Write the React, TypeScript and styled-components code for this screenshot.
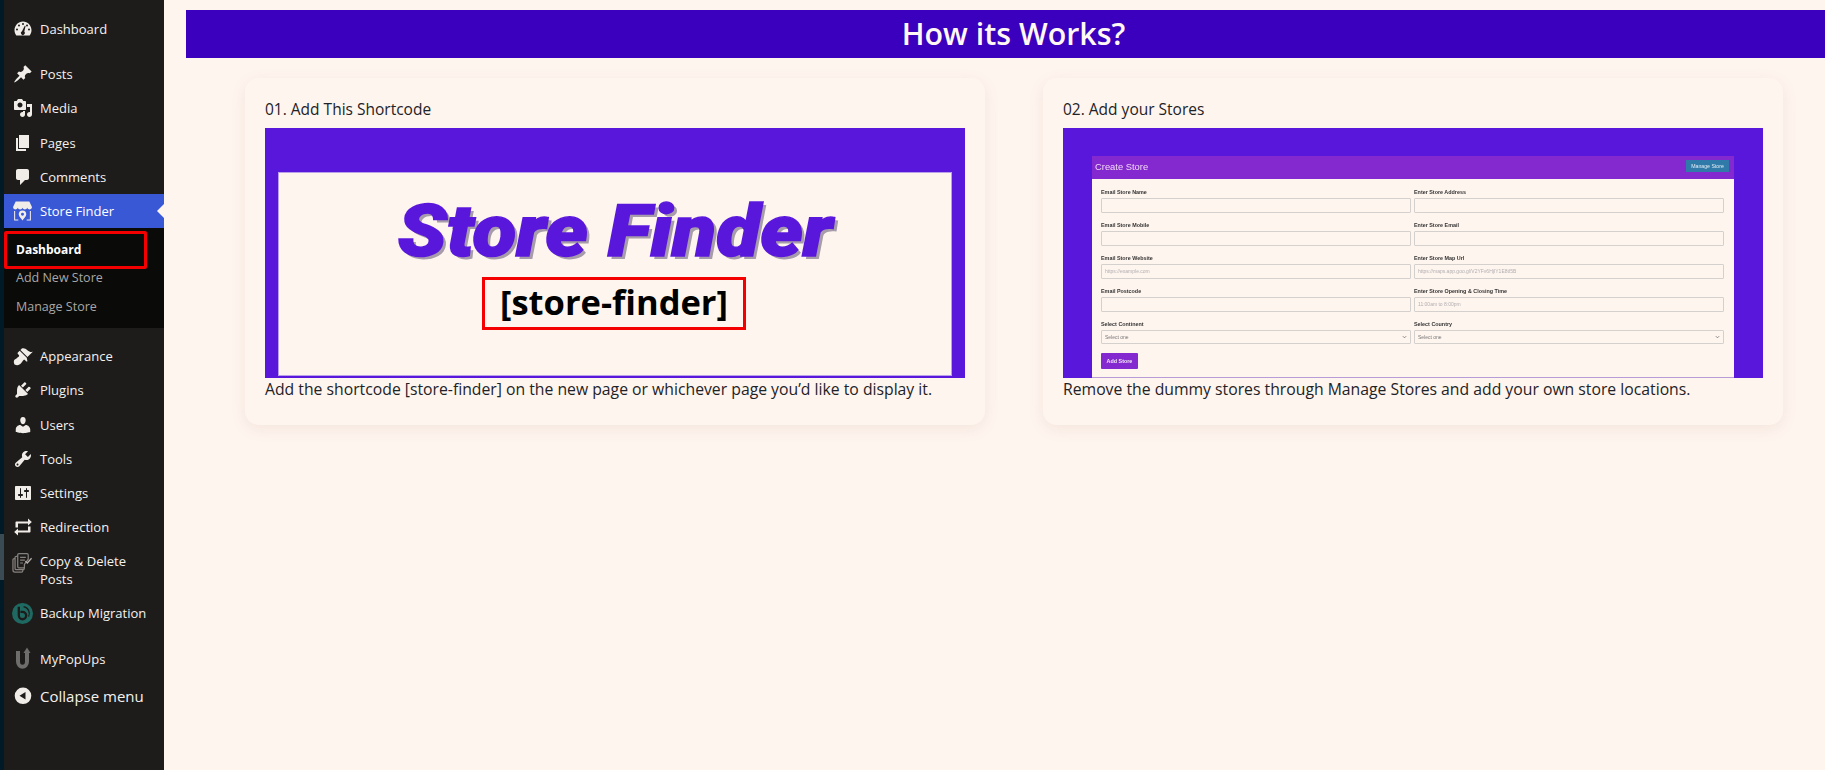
import styled, { createGlobalStyle } from 'styled-components';
import type { ReactNode } from 'react';

const GlobalStyle = createGlobalStyle`
    html, body {
        margin: 0;
        padding: 0;
        background: #fff5ef;
    }
    * {
        box-sizing: border-box;
    }
`;

const Icon = ({ size = 20, children }: { size?: number; children: ReactNode }) => (
    <svg width={size} height={size} viewBox="0 0 20 20" fill="#f0ece8" fillRule="evenodd">
        {children}
    </svg>
);

const icons = {
    dashboard: (
        <Icon>
            <path d="M3.3 16.500h13.400c1.100-1.430 1.800-3.210 1.800-5.140C18.500 6.400 14.700 2.500 10 2.500S1.500 6.400 1.500 11.360c0 1.930.7 3.710 1.800 5.140zM10 4a1 1 0 1 1 0 2 1 1 0 0 1 0-2zM6 5.500a1 1 0 1 1 0 2 1 1 0 0 1 0-2zM14 5.500a1 1 0 1 1 0 2 1 1 0 0 1 0-2zM4 9.500a1 1 0 1 1 0 2 1 1 0 0 1 0-2zM16 9.500a1 1 0 1 1 0 2 1 1 0 0 1 0-2zM11.800 6.800l.8.300-1.300 5.500a2 2 0 1 1-2.300-.4z" />
        </Icon>
    ),
    posts: (
        <Icon>
            <path d="M10.440 3.020l1.820-1.820 6.360 6.350-1.830 1.820c-1.050-.68-2.480-.57-3.410.36l-.75.75c-.92.93-1.040 2.350-.35 3.410l-1.830 1.820-2.410-2.410-2.800 2.790c-.42.42-3.380 2.710-3.800 2.290s1.860-3.390 2.280-3.810l2.790-2.790L4.100 9.360l1.830-1.820c1.050.69 2.480.57 3.400-.36l.75-.75c.93-.92 1.050-2.350.36-3.410z" />
        </Icon>
    ),
    media: (
        <Icon>
            <path d="M13 11V4c0-.55-.45-1-1-1h-1.670L9 1H5L3.670 3H2c-.55 0-1 .45-1 1v7c0 .55.45 1 1 1h10c.55 0 1-.45 1-1zM7 4.500c1.380 0 2.500 1.120 2.500 2.500S8.380 9.500 7 9.500 4.500 8.380 4.500 7 5.620 4.500 7 4.500zM14 6h5v10.500c0 1.380-1.120 2.500-2.500 2.500S14 17.880 14 16.500s1.120-2.500 2.500-2.500c.17 0 .34.020.5.050V9h-3V6zm-4 8.050V13h2v3.500c0 1.380-1.120 2.500-2.500 2.500S7 17.880 7 16.500 8.120 14 9.500 14c.17 0 .34.020.5.050z" />
        </Icon>
    ),
    pages: (
        <Icon>
            <path d="M6 15V2h10v13H6zm-1 1h8v2H3V5h2v11z" />
        </Icon>
    ),
    comments: (
        <Icon>
            <path d="M5 2h9c1.100 0 2 .9 2 2v7c0 1.100-.9 2-2 2h-2l-5 5v-5H5c-1.100 0-2-.9-2-2V4c0-1.100.9-2 2-2z" />
        </Icon>
    ),
    store: (
        <Icon size={22}>
            <path d="M3.500 1h13l2.500 5.200c0 1.300-1 2.300-2.250 2.300-1 0-1.900-.6-2.250-1.500-.35.900-1.200 1.500-2.250 1.500S10.350 7.900 10 7c-.35.900-1.200 1.500-2.250 1.500S5.850 7.900 5.500 7c-.35.900-1.250 1.500-2.250 1.500C2 8.500 1 7.500 1 6.200z" />
            <path d="M2 10h1v8h3v1H2zM18 10h-1v8h-3v1h4z" />
            <path d="M10 9.500a3.600 3.600 0 0 1 3.600 3.600c0 2.300-2.500 4.300-3.600 5.900-1.100-1.600-3.600-3.600-3.600-5.900A3.600 3.600 0 0 1 10 9.500zm0 2.200a1.400 1.400 0 1 0 0 2.800 1.400 1.400 0 0 0 0-2.800z" />
        </Icon>
    ),
    appearance: (
        <Icon>
            <path d="M14.480 11.060L7.410 3.990l1.500-1.500c.5-.56 2.300-.47 3.510.32 1.210.8 1.430 1.280 2.910 2.100 1.180.64 2.450 1.260 4.450.85zm-.71.71L6.700 4.700 4.830 6.570c-.39.39-.39 1.020 0 1.410l1.060 1.060c.39.39.39 1.030 0 1.420-.6.600-1.430 1.110-2.210 1.690-.35.260-.7.530-1.010.84C1.430 13.230 0 15.200 1.520 18.480c3.280 1.520 5.250.090 6.490-1.150.31-.31.580-.66.840-1.010.58-.78 1.090-1.610 1.690-2.210.39-.39 1.020-.39 1.410 0l1.060 1.060c.39.39 1.020.39 1.410 0z" />
        </Icon>
    ),
    plugins: (
        <Icon>
            <path d="M13.110 4.360L9.870 7.600 8 5.730l3.240-3.240c.35-.34 1.050-.2 1.560.32.52.51.66 1.210.31 1.550zm-8 1.770l.91-1.120 9.010 9.010-1.190.84c-.71.710-2.630 1.160-3.820 1.160H6.140L4.900 17.260c-.59.590-1.540.59-2.120 0-.59-.58-.59-1.530 0-2.120l1.240-1.240v-3.880c0-1.130.4-3.190 1.090-3.890zm7.260 3.970l3.240-3.240c.34-.35 1.040-.21 1.550.31.52.51.66 1.210.31 1.550l-3.240 3.250z" />
        </Icon>
    ),
    users: (
        <Icon>
            <path d="M10 9.250c-2.270 0-2.730-3.440-2.730-3.440C7 4.020 7.820 2 9.960 2c2.150 0 2.970 2.020 2.700 3.810 0 0-.41 3.440-2.660 3.440zm0 2.570L12.720 10c2.390 0 4.520 2.330 4.520 4.530v2.490s-3.650 1.130-7.240 1.130c-3.650 0-7.240-1.130-7.240-1.130v-2.490c0-2.250 1.940-4.480 4.470-4.480z" />
        </Icon>
    ),
    tools: (
        <Icon>
            <path d="M16.680 9.770c-1.340 1.340-3.300 1.670-4.950.99l-5.410 6.520c-.99.990-2.590.99-3.580 0s-.99-2.590 0-3.570l6.520-5.420c-.68-1.650-.35-3.610.99-4.950 1.280-1.280 3.120-1.620 4.720-1.060l-2.890 2.890 2.820 2.820 2.860-2.870c.53 1.580.18 3.400-1.080 4.650zM3.810 16.210c.4.390 1.040.39 1.430 0 .4-.4.400-1.040 0-1.430-.39-.4-1.030-.4-1.430 0-.39.390-.39 1.030 0 1.430z" />
        </Icon>
    ),
    settings: (
        <Icon>
            <path d="M18 16V4c0-.55-.45-1-1-1H3c-.55 0-1 .45-1 1v12c0 .55.45 1 1 1h14c.55 0 1-.45 1-1zM8 11h1c.55 0 1 .45 1 1s-.45 1-1 1H8v1.500c0 .280-.22.500-.5.500s-.5-.22-.5-.5V13H6c-.55 0-1-.45-1-1s.45-1 1-1h1V5.500c0-.280.22-.5.5-.5s.5.220.5.500V11zm5-2h-1c-.55 0-1-.45-1-1s.45-1 1-1h1V5.500c0-.280.22-.5.5-.5s.5.220.5.500V7h1c.55 0 1 .45 1 1s-.45 1-1 1h-1v5.500c0 .280-.22.500-.5.500s-.5-.22-.5-.5V9z" />
        </Icon>
    ),
    redirection: (
        <Icon>
            <path d="M15 1.500l3.800 3.500L15 8.500V6.600H5v4H2.500V5.500c0-.55.45-1 1-1H15zM5 18.500L1.200 15 5 11.500v1.900h10v-4h2.500v5.100c0 .55-.45 1-1 1H5z" />
        </Icon>
    ),
    copy: (
        <svg width="22" height="22" viewBox="0 0 22 22" fill="none" stroke="#85817e" strokeWidth="1.300">
            <path d="M6 2.500c0-.8.6-1.300 1.300-1.300h8.400c.7 0 1.300.5 1.300 1.300V7l-4 5.500V16H7.300C6.600 16 6 15.500 6 14.800z" />
            <path d="M6 4H4.500C3.800 4 3.200 4.500 3.200 5.200v11.500c0 .7.6 1.300 1.300 1.300h7c.7 0 1.300-.6 1.300-1.300V16" />
            <path d="M3.200 6.500H2.300C1.600 6.500 1 7 1 7.700v10.600C1 19.400 1.800 20.500 3 20.500h7c.7 0 1.300-.6 1.300-1.300V18" />
            <path d="M8.500 5h6M8.500 8h5M8.500 11h3" />
            <path d="M14 9l2 2 4.500-5" stroke="#b4b0ad" />
        </svg>
    ),
    backup: (
        <svg width="21" height="21" viewBox="0 0 20 20">
            <circle cx="10" cy="10" r="10" fill="#1e6a62" />
            <path d="M6.500 3.500v8.500a3.500 3.500 0 1 0 3.500-3.500H8" fill="none" stroke="#1d1b1a" strokeWidth="2.200" />
            <path d="M11 3.400A6.700 6.700 0 0 1 15.800 13" fill="none" stroke="#1d1b1a" strokeWidth="1.200" />
        </svg>
    ),
    popups: (
        <svg width="18" height="23" viewBox="0 0 18 23" fill="none" stroke="#6f6d6b" strokeWidth="4">
            <path d="M4 4v10.500c0 7 9 7 9 0V5" />
            <path d="M9.500 6L13 .5 16.500 6z" fill="#6f6d6b" stroke="none" />
        </svg>
    ),
    collapse: (
        <Icon size={20}>
            <path d="M10 1.500a8.300 8.300 0 1 1 0 16.600 8.300 8.300 0 0 1 0-16.600zM12.500 6L6.500 9.800l6 3.800z" />
        </Icon>
    ),
};

type Entry = { label: string; icon: ReactNode; top?: number; tall?: boolean };

const upperMenu: Entry[] = [
    { label: 'Dashboard', icon: icons.dashboard },
    { label: 'Posts', icon: icons.posts, top: 11 },
    { label: 'Media', icon: icons.media },
    { label: 'Pages', icon: icons.pages },
    { label: 'Comments', icon: icons.comments },
];

const lowerMenu: Entry[] = [
    { label: 'Appearance', icon: icons.appearance, top: 11 },
    { label: 'Plugins', icon: icons.plugins },
    { label: 'Users', icon: icons.users },
    { label: 'Tools', icon: icons.tools },
    { label: 'Settings', icon: icons.settings },
    { label: 'Redirection', icon: icons.redirection },
    { label: 'Copy & Delete Posts', icon: icons.copy, tall: true },
    { label: 'Backup Migration', icon: icons.backup },
    { label: 'MyPopUps', icon: icons.popups, top: 11 },
];

const formRows = [
    ['Email Store Name', '', 'Enter Store Address', ''],
    ['Email Store Mobile', '', 'Enter Store Email', ''],
    ['Email Store Website', 'https://example.com', 'Enter Store Map Url', 'https://maps.app.goo.gl/V2YFv6HjIY1E8tI5B'],
    ['Email Postcode', '', 'Enter Store Opening & Closing Time', '11:00am to 8:00pm'],
];

const App = () => {
    return (
        <Page>
            <GlobalStyle />
            <Rail>
                <RailMark />
            </Rail>
            <Sidebar>
                {upperMenu.map(item => (
                    <MenuItem key={item.label} $top={item.top}>
                        <IconBox>{item.icon}</IconBox>
                        {item.label}
                    </MenuItem>
                ))}
                <ActiveItem>
                    <IconBox>{icons.store}</IconBox>
                    Store Finder
                </ActiveItem>
                <SubMenu>
                    <MarkedSubItem>Dashboard</MarkedSubItem>
                    <SubItem>Add New Store</SubItem>
                    <SubItem $top={11}>Manage Store</SubItem>
                </SubMenu>
                {lowerMenu.map(item => (
                    <MenuItem key={item.label} $top={item.top} $tall={item.tall}>
                        <IconBox>{item.icon}</IconBox>
                        {item.label}
                    </MenuItem>
                ))}
                <CollapseItem>
                    <IconBox>{icons.collapse}</IconBox>
                    Collapse menu
                </CollapseItem>
            </Sidebar>
            <Main>
                <Banner>How its Works?</Banner>
                <Cards>
                    <Card>
                        <CardTitle>01. Add This Shortcode</CardTitle>
                        <ShortcodeShot>
                            <ShortcodeSheet>
                                <BrandName>Store Finder</BrandName>
                                <ShortcodeBox>[store-finder]</ShortcodeBox>
                            </ShortcodeSheet>
                        </ShortcodeShot>
                        <CardText>Add the shortcode [store-finder] on the new page or whichever page you’d like to display it.</CardText>
                    </Card>
                    <Card>
                        <CardTitle>02. Add your Stores</CardTitle>
                        <FormShot>
                            <FormPanel>
                                <FormHeader>
                                    Create Store
                                    <ManageButton>Manage Store</ManageButton>
                                </FormHeader>
                                <FormGrid>
                                    {formRows.flatMap(row => [
                                        <Field key={row[0]}>
                                            <FieldLabel>{row[0]}</FieldLabel>
                                            <FieldInput>{row[1]}</FieldInput>
                                        </Field>,
                                        <Field key={row[2]}>
                                            <FieldLabel>{row[2]}</FieldLabel>
                                            <FieldInput>{row[3]}</FieldInput>
                                        </Field>,
                                    ])}
                                    {['Select Continent', 'Select Country'].map(label => (
                                        <Field key={label}>
                                            <FieldLabel>{label}</FieldLabel>
                                            <FieldSelect>
                                                Select one
                                                <Chevron viewBox="0 0 6 4">
                                                    <path d="M1 1l2 2 2-2" fill="none" stroke="#555" strokeWidth=".8" />
                                                </Chevron>
                                            </FieldSelect>
                                        </Field>
                                    ))}
                                </FormGrid>
                                <AddButton>Add Store</AddButton>
                            </FormPanel>
                        </FormShot>
                        <CardText>Remove the dummy stores through Manage Stores and add your own store locations.</CardText>
                    </Card>
                </Cards>
            </Main>
        </Page>
    );
};

export default App;

const Page = styled.div`
    display: grid;
    grid-template-columns: 4px 160px 1fr;
    width: 100%;
    height: 770px;
    overflow: hidden;
    background: #fff5ef;
    font-family: "Open Sans", "Noto Sans", sans-serif;
`;

const Rail = styled.div`
    background: #011a27;
    padding-top: 534px;
`;

const RailMark = styled.div`
    height: 46px;
    background: #3b4b53;
`;

const Sidebar = styled.nav`
    display: flex;
    flex-direction: column;
    padding-top: 12px;
    background: #1e1c1b;
    color: #f4f1ee;
    font-size: 13px;
`;

const MenuItem = styled.div<{ $top?: number; $tall?: boolean }>`
    display: flex;
    align-items: ${p => (p.$tall ? 'flex-start' : 'center')};
    gap: 7px;
    height: ${p => (p.$tall ? 52 : 34.2)}px;
    margin-top: ${p => p.$top ?? 0}px;
    padding: ${p => (p.$tall ? 8 : 0)}px 12px 0 8px;
    line-height: 18px;
`;

const IconBox = styled.span`
    display: flex;
    flex: none;
    justify-content: center;
    width: 21px;
`;

const ActiveItem = styled(MenuItem)`
    position: relative;
    background: #3858d6;
    color: #fff;

    &::after {
        content: '';
        position: absolute;
        top: 10px;
        right: 0;
        border: 7px solid transparent;
        border-right-color: #fff5ef;
        border-left-width: 0;
    }
`;

const SubMenu = styled.div`
    display: flex;
    flex-direction: column;
    flex: none;
    height: 100px;
    padding-top: 3px;
    background: #0a0a09;
    color: #a9a7a5;
    font-size: 12.5px;
`;

const SubItem = styled.div<{ $top?: number }>`
    margin-top: ${p => p.$top ?? 0}px;
    padding-left: 12px;
    line-height: 18px;
`;

const MarkedSubItem = styled(SubItem)`
    width: 143px;
    height: 38px;
    padding-left: 9px;
    border: 3px solid #f50000;
    border-radius: 2px;
    color: #fff;
    font-size: 12px;
    font-weight: 700;
    line-height: 31px;
`;

const CollapseItem = styled(MenuItem)`
    margin-top: 3px;
    font-size: 15px;
`;

const Main = styled.main`
    display: flex;
    flex-direction: column;
    padding: 10px 0 0 22px;
    min-width: 0;
`;

const Banner = styled.h1`
    margin: 0;
    height: 48px;
    padding-left: 16px;
    background: #3b00bd;
    color: #fff8f4;
    font-size: 30.4px;
    font-weight: 600;
    line-height: 48px;
    text-align: center;
`;

const Cards = styled.div`
    display: grid;
    grid-template-columns: 740px 740px;
    gap: 58px;
    padding: 20px 0 0 59px;
`;

const Card = styled.section`
    height: 347px;
    padding: 20px 20px 0;
    border-radius: 14px;
    background: #fff5ef;
    box-shadow: 0 4px 16px rgba(120, 80, 60, 0.09);
`;

const CardTitle = styled.h3`
    margin: 0 0 8px;
    color: #1d2327;
    font-size: 15.5px;
    font-weight: 500;
    line-height: 22px;
`;

const CardText = styled.p`
    margin: 0;
    color: #1d2327;
    font-size: 15.75px;
    line-height: 22px;
    white-space: nowrap;
`;

const ShortcodeShot = styled.div`
    height: 250px;
    padding: 44px 13px 2px;
    background: #5a17dc;
`;

const ShortcodeSheet = styled.div`
    display: flex;
    flex-direction: column;
    align-items: center;
    height: 100%;
    padding-top: 18px;
    border: 1px solid #b9a0e8;
    background: #fff5ef;
`;

const BrandName = styled.div`
    color: #5a17dc;
    font-family: Roboto, "Liberation Sans", sans-serif;
    font-size: 72px;
    font-style: italic;
    font-weight: 900;
    line-height: 82px;
    text-shadow: 3px 3px 0 #a79ca9;
    -webkit-text-stroke: 1.5px #5a17dc;
    transform: scaleX(1.12);
`;

const ShortcodeBox = styled.div`
    width: 264px;
    height: 53px;
    margin: 4px 0 0 -2px;
    border: 3px solid #f50000;
    color: #000;
    font-size: 34.5px;
    font-weight: 700;
    line-height: 44px;
    text-align: center;
    white-space: nowrap;
`;

const FormShot = styled.div`
    height: 250px;
    padding: 28px 29px 0;
    background: #5a17dc;
`;

const FormPanel = styled.div`
    height: 222px;
    background: #fff5ef;
    border-bottom: 1px solid #b79cd8;
    font-family: "Liberation Sans", Arial, sans-serif;
    filter: blur(0.4px);
`;

const FormHeader = styled.div`
    display: flex;
    align-items: flex-start;
    justify-content: space-between;
    height: 23px;
    padding: 4px 5px 0 3px;
    background: #8429cf;
    color: #f3d8f5;
    font-size: 9.4px;
    line-height: 14px;
`;

const ManageButton = styled.div`
    width: 43px;
    height: 12px;
    background: #2f7aa8;
    color: #e5eef5;
    font-size: 5.2px;
    line-height: 12px;
    text-align: center;
`;

const FormGrid = styled.div`
    display: grid;
    grid-template-columns: 310px 310px;
    gap: 0 3px;
    padding: 8px 0 0 9px;
`;

const Field = styled.div`
    height: 33px;
`;

const FieldLabel = styled.div`
    height: 10px;
    color: #333;
    font-size: 5.4px;
    font-weight: 700;
    line-height: 11px;
`;

const FieldInput = styled.div`
    height: 15px;
    margin-top: 1px;
    padding-left: 3px;
    border: 1px solid #d4d0ce;
    border-radius: 1px;
    color: #b0aeb0;
    font-size: 5px;
    line-height: 13px;
    white-space: nowrap;
`;

const FieldSelect = styled(FieldInput)`
    display: flex;
    align-items: center;
    justify-content: space-between;
    height: 14px;
    padding-right: 3px;
    color: #777;
`;

const Chevron = styled.svg`
    width: 5px;
    height: 4px;
`;

const AddButton = styled.div`
    width: 37px;
    height: 16px;
    margin: 1px 0 0 9px;
    border-radius: 1px;
    background: #8429cf;
    color: #f3e4f8;
    font-size: 5.4px;
    font-weight: 700;
    line-height: 16px;
    text-align: center;
`;
